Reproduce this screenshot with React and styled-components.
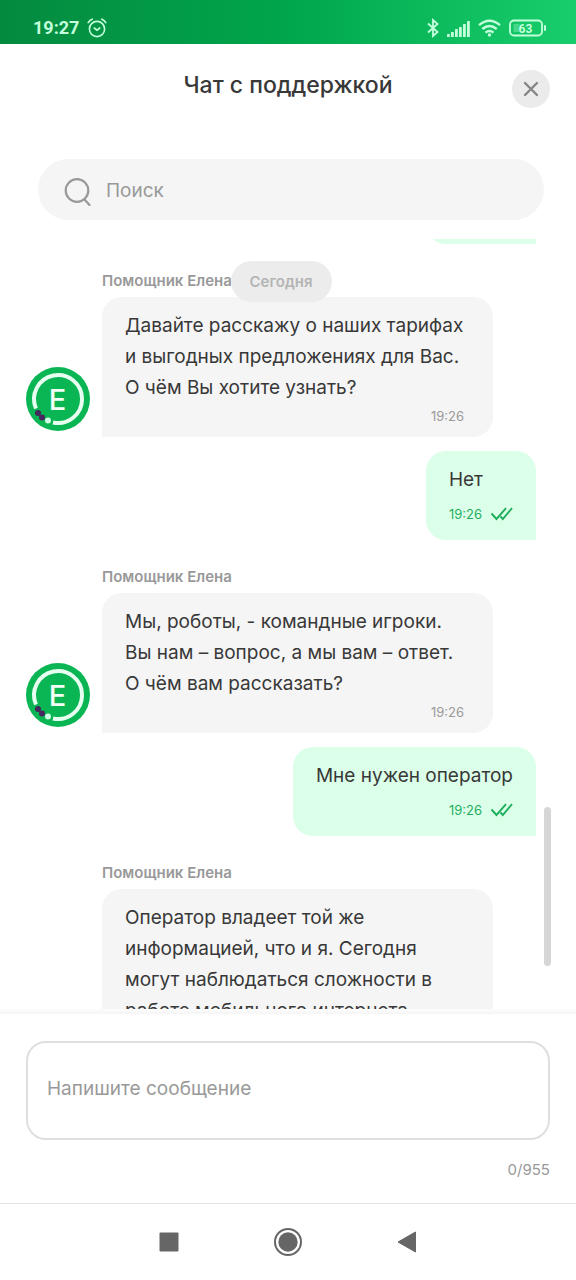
import React, { useState } from "react";
import styled, { createGlobalStyle, css } from "styled-components";

const GlobalStyle = createGlobalStyle`
  * {
    box-sizing: border-box;
  }

  body {
    margin: 0;
    background: #ffffff;
    color: #383838;
    font-family: Inter, "Noto Sans", sans-serif;
  }
`;

const StyledScreen = styled.div`
  display: flex;
  flex-direction: column;
  height: 100vh;
`;

const StyledStatusBar = styled.div`
  flex: none;
  display: flex;
  align-items: center;
  justify-content: space-between;
  padding: 12px 29px 0 33px;
  height: 44px;
  background: linear-gradient(90deg, #048a3f 0%, #00a64c 50%, #18ce6c 100%);
  color: #c4ffdc;
`;

const StyledStatusGroup = styled.div`
  display: flex;
  align-items: center;
  gap: 8px;
`;

const StyledClock = styled.span`
  font-family: Roboto, sans-serif;
  font-weight: 700;
  font-size: 18px;
  line-height: 22px;
`;

const StyledHeader = styled.header`
  flex: none;
  display: grid;
  grid-template-columns: 38px 1fr 38px;
  padding: 26px 26px 0;
`;

const StyledTitle = styled.h1`
  grid-column-start: 2;
  margin: 0;
  font-weight: 500;
  font-size: 23px;
  line-height: 31px;
  text-align: center;
`;

const StyledCloseButton = styled.button`
  display: flex;
  align-items: center;
  justify-content: center;
  width: 38px;
  height: 38px;
  padding: 0;
  border: none;
  border-radius: 50%;
  background: #ebebeb;
  color: #858585;
`;

const StyledSearch = styled.label`
  flex: none;
  display: flex;
  align-items: center;
  gap: 14px;
  height: 61px;
  margin: 51px 32px 19px 38px;
  padding: 2px 26px 0;
  border-radius: 31px;
  background: #f5f5f5;
  color: #999999;
`;

const StyledSearchInput = styled.input`
  flex: 1;
  min-width: 0;
  padding: 0;
  border: none;
  outline: none;
  background: transparent;
  font-family: inherit;
  font-size: 19px;
  line-height: 31px;
  color: #383838;

  &::placeholder {
    color: #999999;
    opacity: 1;
  }
`;

const StyledChat = styled.main`
  position: relative;
  flex: 1;
  min-height: 0;
  overflow: hidden;
  padding: 0 40px 0 26px;
`;

const StyledDate = styled.div`
  position: absolute;
  top: 22px;
  left: 26px;
  right: 40px;
  display: flex;
  justify-content: center;
`;

const StyledDatePill = styled.span`
  padding: 10px 19px;
  border-radius: 21px;
  background: #ececec;
  font-weight: 600;
  font-size: 15px;
  line-height: 21px;
  color: #b4b4b4;
`;

const StyledScrollThumb = styled.div`
  position: absolute;
  top: 568px;
  right: 25px;
  width: 7px;
  height: 159px;
  border-radius: 4px;
  background: #d6d6d6;
`;

const StyledSender = styled.div`
  margin: 27px 0 6px 76px;
  font-weight: 600;
  font-size: 15px;
  line-height: 20px;
  color: #999999;
`;

const StyledRow = styled.div`
  display: flex;
  align-items: flex-end;
  gap: 12px;
  justify-content: ${({ $own }) => ($own ? "flex-end" : "flex-start")};
  margin-top: ${({ $own }) => ($own ? "14px" : "0")};
`;

// the end of a bubble that is scrolled out under the search field
const StyledScrolledRow = styled(StyledRow)`
  height: 5px;
  margin-top: 0;
  overflow: hidden;
`;

const StyledAvatar = styled.svg`
  flex: none;
  width: 64px;
  height: 64px;
  margin-bottom: 6px;
`;

const StyledAvatarSpace = styled.div`
  flex: none;
  width: 64px;
`;

const StyledBubble = styled.div`
  border-radius: 20px;
  ${({ $own }) =>
    $own
      ? css`
          min-width: 110px;
          min-height: 89px;
          padding: 13px 23px;
          border-bottom-right-radius: 0;
          background: #dcffe9;
        `
      : css`
          flex: 1;
          margin-right: 43px;
          padding: 13px 23px 8px;
          border-bottom-left-radius: 0;
          background: #f5f5f5;
        `}
`;

const StyledText = styled.p`
  margin: 0;
  font-size: 19px;
  line-height: 31px;
  white-space: pre-line;
`;

const StyledMeta = styled.div`
  display: flex;
  align-items: center;
  justify-content: flex-end;
  gap: 8px;
  margin: ${({ $own }) => ($own ? "6px 0 0" : "0 6px 0 0")};
  font-size: 13px;
  line-height: 26px;
  color: ${({ $own }) => ($own ? "#1fae5e" : "#999999")};
`;

const StyledComposer = styled.form`
  flex: none;
  padding: 32px 26px 0;
  border-bottom: 1px solid #e4e4e4;
  background: linear-gradient(#fdfdfd, #f5f5f5) top / 100% 5px no-repeat;
`;

const StyledTextarea = styled.textarea`
  display: block;
  width: 100%;
  height: 99px;
  padding: 30px 19px;
  border: 2px solid #dfdfdf;
  border-radius: 20px;
  outline: none;
  resize: none;
  background: #ffffff;
  font-family: inherit;
  font-size: 19px;
  line-height: 31px;
  color: #383838;

  &::placeholder {
    color: #999999;
    opacity: 1;
  }
`;

const StyledCounter = styled.div`
  padding: 17px 0 21px;
  font-size: 15px;
  line-height: 25px;
  text-align: right;
  color: #999999;
`;

const StyledNav = styled.nav`
  flex: none;
  display: flex;
  align-items: center;
  justify-content: center;
  gap: 95px;
  height: 76px;
`;

const StyledNavButton = styled.button`
  display: flex;
  padding: 0;
  border: none;
  background: transparent;
  color: #666666;
`;

const LIMIT = 955;

const messages = [
  {
    text: "Давайте расскажу о наших тарифах\nи выгодных предложениях для Вас.\nО чём Вы хотите узнать?",
    time: "19:26",
  },
  { own: true, text: "Нет", time: "19:26" },
  {
    text: "Мы, роботы, - командные игроки.\nВы нам – вопрос, а мы вам – ответ.\nО чём вам рассказать?",
    time: "19:26",
  },
  { own: true, text: "Мне нужен оператор", time: "19:26" },
  {
    text: "Оператор владеет той же\nинформацией, что и я. Сегодня\nмогут наблюдаться сложности в\nработе мобильного интернета.",
    pending: true,
  },
];

function AlarmIcon() {
  return (
    <svg width="20" height="20" viewBox="0 0 20 20" fill="none" stroke="currentColor" strokeLinecap="round">
      <circle cx="10" cy="11" r="7.6" strokeWidth="1.6" />
      <path d="M7.2 10l2.8 2.2 2.8-2.2" strokeWidth="1.6" />
      <path d="M1.2 4.6Q2.6 2.3 5.2 1.2M18.8 4.6Q17.4 2.3 14.8 1.2" strokeWidth="1.7" />
    </svg>
  );
}

function BluetoothIcon() {
  return (
    <svg width="12" height="20" viewBox="0 0 12 20" fill="none" stroke="currentColor" strokeWidth="1.8">
      <path d="M1 5.5l9.5 8.5L6 18V2l4.5 4L1 14.5" />
    </svg>
  );
}

function SignalIcon() {
  const bars = [3, 5, 8, 10, 13, 16];
  return (
    <svg width="23" height="17" viewBox="0 0 23 17" fill="currentColor">
      {bars.map((h, i) => (
        <rect key={h} x={i * 4} y={17 - h} width="2.8" height={h} rx="0.5" />
      ))}
    </svg>
  );
}

function WifiIcon() {
  return (
    <svg width="23" height="18" viewBox="0 0 23 18" fill="none" stroke="currentColor" strokeWidth="2.4">
      <path d="M1 6.2Q11.5 -2.8 22 6.2" />
      <path d="M4.3 10Q11.5 3.8 18.7 10" />
      <path d="M7.5 13.6Q11.5 10.2 15.5 13.6" />
      <circle cx="11.5" cy="16" r="1.7" fill="currentColor" stroke="none" />
    </svg>
  );
}

function BatteryIcon() {
  return (
    <svg width="38" height="18" viewBox="0 0 38 18" fill="none">
      <rect x="1" y="1.5" width="32" height="15" rx="4" stroke="currentColor" strokeWidth="1.8" />
      <rect x="4.5" y="5" width="6" height="8" fill="currentColor" opacity="0.3" />
      <path d="M36 7v4" stroke="currentColor" strokeWidth="2" strokeLinecap="round" />
      <text
        x="16.5"
        y="13.5"
        textAnchor="middle"
        fontFamily="Roboto, sans-serif"
        fontWeight="700"
        fontSize="12"
        fill="currentColor"
      >
        63
      </text>
    </svg>
  );
}

function SearchIcon() {
  return (
    <svg width="28" height="30" viewBox="0 0 28 30" fill="none" stroke="currentColor" strokeLinecap="round">
      <circle cx="13" cy="14.5" r="11.3" strokeWidth="2.2" />
      <path d="M20.5 23.5l5 5.5" strokeWidth="2.2" />
    </svg>
  );
}

function ChecksIcon() {
  return (
    <svg width="23" height="14" viewBox="0 0 23 14" fill="none" stroke="currentColor" strokeWidth="1.9">
      <path d="M1.5 6.5l5 5.5L16 1.2M10.5 9.5l2.3 2.5L22 1.2" />
    </svg>
  );
}

function Avatar() {
  return (
    <StyledAvatar viewBox="0 0 64 64">
      <circle cx="32" cy="32" r="32" fill="#0ab553" />
      <path d="M27 55.5A24 24 0 1 0 10 41.5" fill="none" stroke="#e6fff0" strokeWidth="4" />
      <circle cx="12" cy="46" r="3" fill="#46265f" />
      <circle cx="16" cy="50.5" r="3" fill="#46265f" />
      <circle cx="22" cy="53.5" r="3" fill="#ccffe4" />
      <text
        x="31.5"
        y="43"
        textAnchor="middle"
        fontFamily="Inter, sans-serif"
        fontSize="29"
        fontWeight="500"
        fill="#f2fff7"
      >
        E
      </text>
    </StyledAvatar>
  );
}

function Message({ own, text, time, pending }) {
  return (
    <>
      {!own && <StyledSender>Помощник Елена</StyledSender>}
      <StyledRow $own={own}>
        {!own && (pending ? <StyledAvatarSpace /> : <Avatar />)}
        <StyledBubble $own={own}>
          <StyledText>{text}</StyledText>
          {time && (
            <StyledMeta $own={own}>
              {time}
              {own && <ChecksIcon />}
            </StyledMeta>
          )}
        </StyledBubble>
      </StyledRow>
    </>
  );
}

export default function App() {
  const [draft, setDraft] = useState("");

  return (
    <StyledScreen>
      <GlobalStyle />
      <StyledStatusBar>
        <StyledStatusGroup>
          <StyledClock>19:27</StyledClock>
          <AlarmIcon />
        </StyledStatusGroup>
        <StyledStatusGroup>
          <BluetoothIcon />
          <SignalIcon />
          <WifiIcon />
          <BatteryIcon />
        </StyledStatusGroup>
      </StyledStatusBar>

      <StyledHeader>
        <StyledTitle>Чат с поддержкой</StyledTitle>
        <StyledCloseButton type="button" aria-label="Закрыть">
          <svg width="16" height="16" viewBox="0 0 16 16" fill="none" stroke="currentColor" strokeWidth="2.4">
            <path d="M2 2l12 12M14 2L2 14" strokeLinecap="round" />
          </svg>
        </StyledCloseButton>
      </StyledHeader>

      <StyledSearch>
        <SearchIcon />
        <StyledSearchInput type="text" placeholder="Поиск" aria-label="Поиск" />
      </StyledSearch>

      <StyledChat>
        <StyledScrolledRow $own>
          <StyledBubble $own />
        </StyledScrolledRow>
        {messages.map((m) => (
          <Message key={m.text} {...m} />
        ))}
        <StyledDate>
          <StyledDatePill>Сегодня</StyledDatePill>
        </StyledDate>
        <StyledScrollThumb />
      </StyledChat>

      <StyledComposer>
        <StyledTextarea
          rows={1}
          maxLength={LIMIT}
          placeholder="Напишите сообщение"
          aria-label="Сообщение"
          value={draft}
          onChange={(e) => setDraft(e.target.value)}
        />
        <StyledCounter>
          {draft.length}/{LIMIT}
        </StyledCounter>
      </StyledComposer>

      <StyledNav>
        <StyledNavButton type="button" aria-label="Недавние">
          <svg width="20" height="20" viewBox="0 0 20 20" fill="currentColor">
            <rect x="0.5" y="0.5" width="19" height="19" rx="1" />
          </svg>
        </StyledNavButton>
        <StyledNavButton type="button" aria-label="Домой">
          <svg width="28" height="28" viewBox="0 0 28 28">
            <circle cx="14" cy="14" r="13" fill="none" stroke="currentColor" strokeWidth="2" />
            <circle cx="14" cy="14" r="9.7" fill="currentColor" />
          </svg>
        </StyledNavButton>
        <StyledNavButton type="button" aria-label="Назад">
          <svg width="20" height="22" viewBox="0 0 20 22" fill="currentColor">
            <path d="M18.5 1v20L1 11z" stroke="currentColor" strokeLinejoin="round" />
          </svg>
        </StyledNavButton>
      </StyledNav>
    </StyledScreen>
  );
}
